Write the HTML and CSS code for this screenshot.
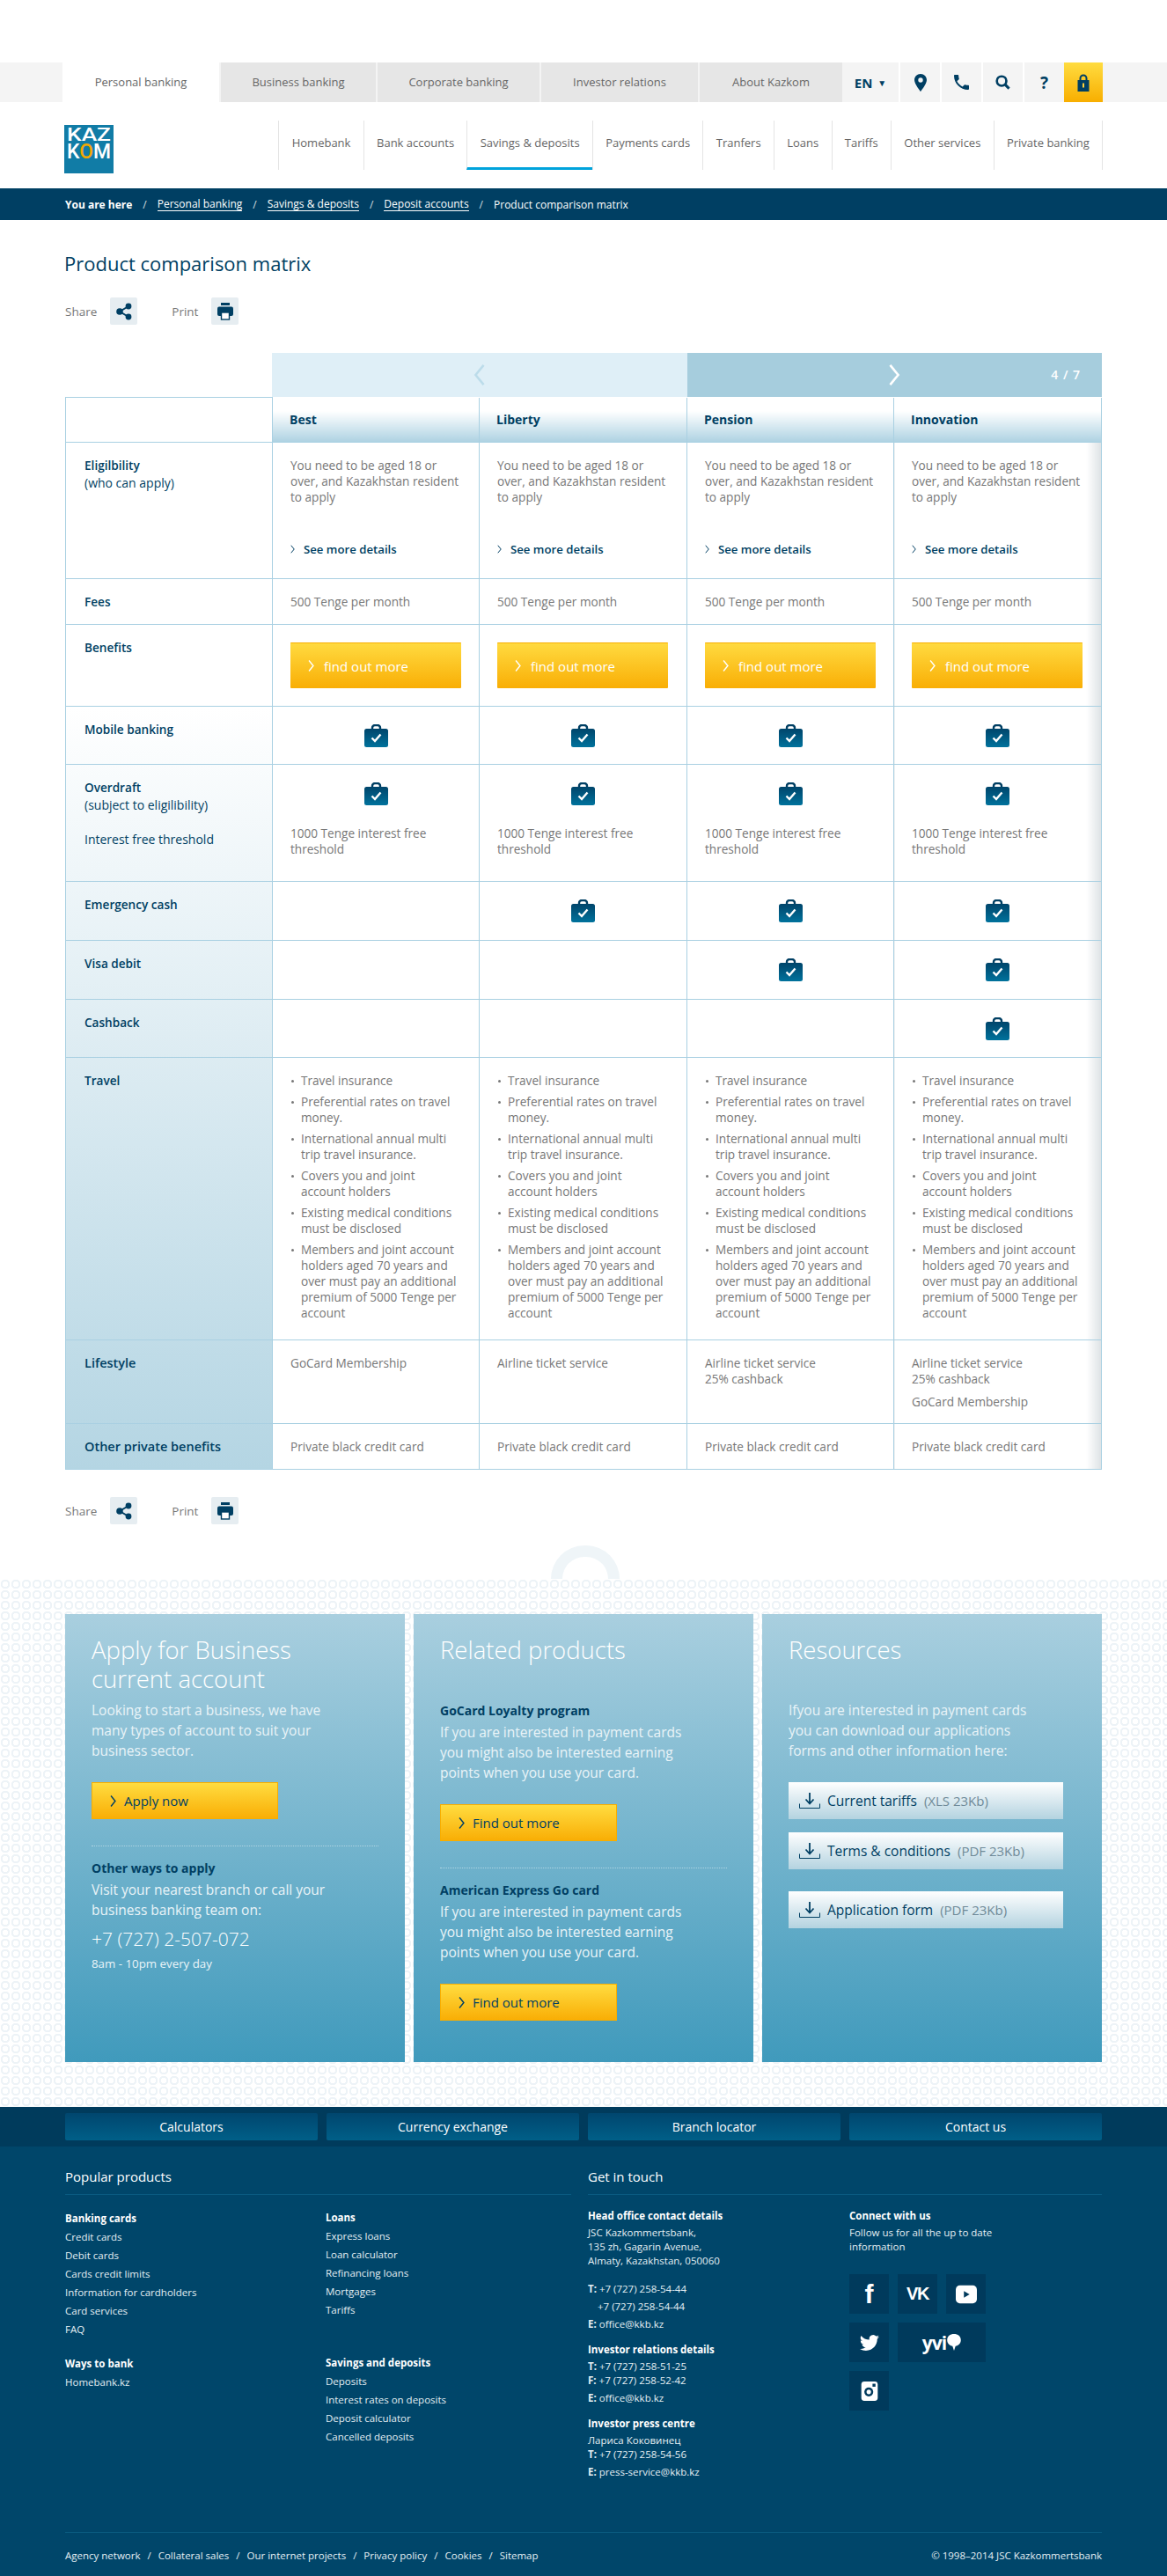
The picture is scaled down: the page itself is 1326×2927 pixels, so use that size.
FILE: index.html
```html
<!DOCTYPE html>
<html lang="en">
<head>
  <meta charset="UTF-8" />
  <title>Product comparison matrix</title>
  <link rel="stylesheet" href="styles.css">
</head>
<body>
  <svg class="sprite" xmlns="http://www.w3.org/2000/svg">
    <defs>
      <linearGradient id="bagFill" x1="0" y1="0" x2="0" y2="1">
        <stop offset="0" stop-color="#00456b"/>
        <stop offset="1" stop-color="#00729c"/>
      </linearGradient>
    </defs>
    <symbol id="i-bag" viewBox="0 0 27 26">
      <path d="M9 7V4a3 3 0 0 1 3-3h3a3 3 0 0 1 3 3v3" fill="none" stroke="#003f63" stroke-width="2.4"/>
      <rect x="0" y="5" width="27" height="21" rx="2.5" fill="url(#bagFill)"/>
      <polyline points="8.5,15.5 12,19 18.5,11.5" fill="none" stroke="#fff" stroke-width="2.4"/>
    </symbol>
    <symbol id="i-chev" viewBox="0 0 10 20">
      <polyline points="1.5,1.5 8.5,10 1.5,18.5" fill="none" stroke="currentColor" stroke-width="2"/>
    </symbol>
    <symbol id="i-share" viewBox="0 0 18 20">
      <path d="M14 4 4 10l10 6" fill="none" stroke="#003f63" stroke-width="2"/>
      <circle cx="14" cy="4" r="3.4" fill="#003f63"/>
      <circle cx="4" cy="10" r="3.8" fill="#003f63"/>
      <circle cx="14" cy="16" r="3.4" fill="#003f63"/>
    </symbol>
    <symbol id="i-print" viewBox="0 0 18 20">
      <rect x="4" y="0" width="10" height="3" fill="#003f63"/>
      <rect x="0" y="4.5" width="18" height="10.5" rx="2" fill="#003f63"/>
      <rect x="4.5" y="11" width="9" height="8" fill="#fff" stroke="#003f63" stroke-width="1.4"/>
    </symbol>
    <symbol id="i-pin" viewBox="0 0 14 20">
      <path fill-rule="evenodd" fill="#003f63" d="M7 0C3 0 0 3 0 7c0 4.500 7 13 7 13s7-8.500 7-13c0-4-3-7-7-7zm0 4.300a2.700 2.700 0 1 1 0 5.400 2.700 2.700 0 0 1 0-5.400z"/>
    </symbol>
    <symbol id="i-phone" viewBox="3 3 18 18">
      <path fill="#003f63" d="M6.620 10.790c1.440 2.830 3.760 5.140 6.590 6.590l2.200-2.200c.27-.27.67-.36 1.020-.24 1.120.37 2.330.57 3.570.57.550 0 1 .45 1 1V20c0 .55-.45 1-1 1-9.390 0-17-7.610-17-17 0-.55.45-1 1-1h3.500c.55 0 1 .45 1 1 0 1.250.2 2.450.57 3.570.11.35.03.74-.25 1.020l-2.200 2.200z"/>
    </symbol>
    <symbol id="i-search" viewBox="0 0 18 18">
      <circle cx="7.500" cy="7.500" r="5.700" fill="none" stroke="#003f63" stroke-width="2.800"/>
      <line x1="11.500" y1="11.500" x2="16.500" y2="16.500" stroke="#003f63" stroke-width="3.200"/>
    </symbol>
    <symbol id="i-lock" viewBox="0 0 14 20">
      <path d="M3.500 8V5a3.500 3.500 0 0 1 7 0v3" fill="none" stroke="#003f63" stroke-width="2"/>
      <rect x="0.500" y="7" width="13" height="13" fill="#003f63"/>
      <rect x="6" y="10.500" width="2" height="5" fill="#ffd23a"/>
    </symbol>
    <symbol id="i-down" viewBox="0 0 24 18">
      <path d="M12 0v12M7.500 7.500 12 12.500l4.500-5" fill="none" stroke="#003f63" stroke-width="1.800"/>
      <path d="M.5 12.500v5h23v-5" fill="none" stroke="#003f63" stroke-width="1"/>
    </symbol>
  </svg>

  <header>
    <div class="top-strip">
      <div class="wrap top-row">
        <ul class="tabs">
          <li class="tab tab-active">Personal banking</li>
          <li class="tab">Business banking</li>
          <li class="tab">Corporate banking</li>
          <li class="tab">Investor relations</li>
          <li class="tab">About Kazkom</li>
        </ul>
        <div class="tools">
          <a class="tool tool-lang">EN <span class="caret">▼</span></a>
          <a class="tool"><svg class="ic-pin"><use href="#i-pin"/></svg></a>
          <a class="tool"><svg class="ic-tool"><use href="#i-phone"/></svg></a>
          <a class="tool"><svg class="ic-tool"><use href="#i-search"/></svg></a>
          <a class="tool tool-help">?</a>
          <a class="tool tool-lock"><svg class="ic-pin"><use href="#i-lock"/></svg></a>
        </div>
      </div>
    </div>

    <div class="wrap main-head">
      <svg class="logo" viewBox="0 0 56 55">
        <rect width="56" height="55" fill="#117ca6"/>
        <text class="logo-kaz" x="3" y="18" textLength="50" lengthAdjust="spacingAndGlyphs">KAZ</text>
        <text class="logo-kom" x="3" y="38" textLength="50" lengthAdjust="spacingAndGlyphs">K<tspan fill="#f5a800">O</tspan>M</text>
      </svg>
      <nav class="main-nav">
        <a>Homebank</a>
        <a>Bank accounts</a>
        <a class="current">Savings &amp; deposits</a>
        <a>Payments cards</a>
        <a>Tranfers</a>
        <a>Loans</a>
        <a>Tariffs</a>
        <a>Other services</a>
        <a>Private banking</a>
      </nav>
    </div>

    <div class="crumbs">
      <div class="wrap crumbs-row">
        <strong>You are here</strong><i>/</i>
        <a>Personal banking</a><i>/</i>
        <a>Savings &amp; deposits</a><i>/</i>
        <a>Deposit accounts</a><i>/</i>
        <span>Product comparison matrix</span>
      </div>
    </div>
  </header>

  <main class="wrap">
    <h1>Product comparison matrix</h1>
    <div class="share-row">
      <span>Share</span><a class="share-btn"><svg class="ic-share"><use href="#i-share"/></svg></a>
      <span class="print-label">Print</span><a class="share-btn"><svg class="ic-share"><use href="#i-print"/></svg></a>
    </div>

    <div class="pager">
      <div class="pager-prev"><svg class="ic-pager"><use href="#i-chev" transform="matrix(-1 0 0 1 14 0)"/></svg></div>
      <div class="pager-next"><svg class="ic-pager"><use href="#i-chev"/></svg><span class="pager-count">4 / 7</span></div>
    </div>

    <table class="matrix">
      <colgroup>
        <col class="col-label"><col class="col-a"><col class="col-b"><col class="col-a"><col class="col-b">
      </colgroup>
      <thead>
        <tr class="r-head">
          <td class="corner"></td>
          <th>Best</th><th>Liberty</th><th>Pension</th><th>Innovation</th>
        </tr>
      </thead>
      <tbody>
        <tr class="r-elig">
          <th>Eligilbility<span class="sub">(who can apply)</span></th>
          <td><p>You need to be aged 18 or over, and Kazakhstan resident to apply</p><a class="more"><svg class="ic-more"><use href="#i-chev"/></svg>See more details</a></td>
          <td><p>You need to be aged 18 or over, and Kazakhstan resident to apply</p><a class="more"><svg class="ic-more"><use href="#i-chev"/></svg>See more details</a></td>
          <td><p>You need to be aged 18 or over, and Kazakhstan resident to apply</p><a class="more"><svg class="ic-more"><use href="#i-chev"/></svg>See more details</a></td>
          <td><p>You need to be aged 18 or over, and Kazakhstan resident to apply</p><a class="more"><svg class="ic-more"><use href="#i-chev"/></svg>See more details</a></td>
        </tr>
        <tr class="r-fees">
          <th>Fees</th>
          <td>500 Tenge per month</td><td>500 Tenge per month</td><td>500 Tenge per month</td><td>500 Tenge per month</td>
        </tr>
        <tr class="r-benefits">
          <th>Benefits</th>
          <td><a class="find"><svg class="ic-find"><use href="#i-chev"/></svg>find out more</a></td>
          <td><a class="find"><svg class="ic-find"><use href="#i-chev"/></svg>find out more</a></td>
          <td><a class="find"><svg class="ic-find"><use href="#i-chev"/></svg>find out more</a></td>
          <td><a class="find"><svg class="ic-find"><use href="#i-chev"/></svg>find out more</a></td>
        </tr>
      </tbody>
      <tbody class="shaded">
        <tr class="r-tick">
          <th>Mobile banking</th>
          <td class="tick"><svg class="ic-bag"><use href="#i-bag"/></svg></td>
          <td class="tick"><svg class="ic-bag"><use href="#i-bag"/></svg></td>
          <td class="tick"><svg class="ic-bag"><use href="#i-bag"/></svg></td>
          <td class="tick"><svg class="ic-bag"><use href="#i-bag"/></svg></td>
        </tr>
        <tr class="r-overdraft">
          <th>Overdraft<span class="sub">(subject to eligilibility)</span><span class="sub sub-gap">Interest free threshold</span></th>
          <td class="tick"><svg class="ic-bag"><use href="#i-bag"/></svg><p class="threshold">1000 Tenge interest free threshold</p></td>
          <td class="tick"><svg class="ic-bag"><use href="#i-bag"/></svg><p class="threshold">1000 Tenge interest free threshold</p></td>
          <td class="tick"><svg class="ic-bag"><use href="#i-bag"/></svg><p class="threshold">1000 Tenge interest free threshold</p></td>
          <td class="tick"><svg class="ic-bag"><use href="#i-bag"/></svg><p class="threshold">1000 Tenge interest free threshold</p></td>
        </tr>
        <tr class="r-tick-tall">
          <th>Emergency cash</th>
          <td></td>
          <td class="tick"><svg class="ic-bag"><use href="#i-bag"/></svg></td>
          <td class="tick"><svg class="ic-bag"><use href="#i-bag"/></svg></td>
          <td class="tick"><svg class="ic-bag"><use href="#i-bag"/></svg></td>
        </tr>
        <tr class="r-tick-tall">
          <th>Visa debit</th>
          <td></td>
          <td></td>
          <td class="tick"><svg class="ic-bag"><use href="#i-bag"/></svg></td>
          <td class="tick"><svg class="ic-bag"><use href="#i-bag"/></svg></td>
        </tr>
        <tr class="r-tick">
          <th>Cashback</th>
          <td></td>
          <td></td>
          <td></td>
          <td class="tick"><svg class="ic-bag"><use href="#i-bag"/></svg></td>
        </tr>
        <tr class="r-travel">
          <th>Travel</th>
          <td><ul class="perks"><li>Travel insurance</li><li>Preferential rates on travel money.</li><li>International annual multi trip travel insurance.</li><li>Covers you and joint account holders</li><li>Existing medical conditions must be disclosed</li><li>Members and joint account holders aged 70 years and over must pay an additional premium of 5000 Tenge per account</li></ul></td>
          <td><ul class="perks"><li>Travel insurance</li><li>Preferential rates on travel money.</li><li>International annual multi trip travel insurance.</li><li>Covers you and joint account holders</li><li>Existing medical conditions must be disclosed</li><li>Members and joint account holders aged 70 years and over must pay an additional premium of 5000 Tenge per account</li></ul></td>
          <td><ul class="perks"><li>Travel insurance</li><li>Preferential rates on travel money.</li><li>International annual multi trip travel insurance.</li><li>Covers you and joint account holders</li><li>Existing medical conditions must be disclosed</li><li>Members and joint account holders aged 70 years and over must pay an additional premium of 5000 Tenge per account</li></ul></td>
          <td><ul class="perks"><li>Travel insurance</li><li>Preferential rates on travel money.</li><li>International annual multi trip travel insurance.</li><li>Covers you and joint account holders</li><li>Existing medical conditions must be disclosed</li><li>Members and joint account holders aged 70 years and over must pay an additional premium of 5000 Tenge per account</li></ul></td>
        </tr>
        <tr class="r-lifestyle">
          <th class="big">Lifestyle</th>
          <td>GoCard Membership</td>
          <td>Airline ticket service</td>
          <td>Airline ticket service<br>25% cashback</td>
          <td>Airline ticket service<br>25% cashback<p class="extra">GoCard Membership</p></td>
        </tr>
        <tr class="r-other">
          <th class="big">Other private benefits</th>
          <td>Private black credit card</td><td>Private black credit card</td><td>Private black credit card</td><td>Private black credit card</td>
        </tr>
      </tbody>
    </table>

    <div class="share-row share-row-end">
      <span>Share</span><a class="share-btn"><svg class="ic-share"><use href="#i-share"/></svg></a>
      <span class="print-label">Print</span><a class="share-btn"><svg class="ic-share"><use href="#i-print"/></svg></a>
    </div>
  </main>

  <section class="promo">
    <div class="promo-arc"></div>
    <div class="wrap promo-grid">
      <article class="card">
        <h2>Apply for Business<br>current account</h2>
        <p>Looking to start a business, we have many types of account to suit your business sector.</p>
        <a class="cta cta-apply"><svg class="ic-cta"><use href="#i-chev"/></svg>Apply now</a>
        <hr class="dots">
        <h3>Other ways to apply</h3>
        <p>Visit your nearest branch or call your business banking team on:</p>
        <p class="phone">+7 (727) 2-507-072</p>
        <p class="hours">8am - 10pm every day</p>
      </article>
      <article class="card">
        <h2 class="h-single">Related products</h2>
        <h3>GoCard Loyalty program</h3>
        <p>If you are interested in payment cards you might also be interested earning points when you use your card.</p>
        <a class="cta"><svg class="ic-cta"><use href="#i-chev"/></svg>Find out more</a>
        <hr class="dots">
        <h3>American Express Go card</h3>
        <p>If you are interested in payment cards you might also be interested earning points when you use your card.</p>
        <a class="cta"><svg class="ic-cta"><use href="#i-chev"/></svg>Find out more</a>
      </article>
      <article class="card">
        <h2 class="h-single">Resources</h2>
        <p>Ifyou are interested in payment cards you can download our applications forms and other information here:</p>
        <div class="files">
          <a class="file"><svg class="ic-down"><use href="#i-down"/></svg>Current tariffs<small>(XLS 23Kb)</small></a>
          <a class="file"><svg class="ic-down"><use href="#i-down"/></svg>Terms &amp; conditions<small>(PDF 23Kb)</small></a>
          <a class="file file-gap"><svg class="ic-down"><use href="#i-down"/></svg>Application form<small>(PDF 23Kb)</small></a>
        </div>
      </article>
    </div>
  </section>

  <footer>
    <div class="quick">
      <div class="wrap quick-row">
        <a>Calculators</a><a>Currency exchange</a><a>Branch locator</a><a>Contact us</a>
      </div>
    </div>
    <div class="wrap foot-cols">
      <section class="foot-left">
        <h4>Popular products</h4>
        <div class="foot-grid">
          <div>
            <ul class="foot-list foot-first">
              <li class="head">Banking cards</li>
              <li>Credit cards</li><li>Debit cards</li><li>Cards credit limits</li>
              <li>Information for cardholders</li><li>Card services</li><li>FAQ</li>
            </ul>
            <ul class="foot-list">
              <li class="head">Ways to bank</li>
              <li>Homebank.kz</li>
            </ul>
          </div>
          <div>
            <ul class="foot-list foot-loans">
              <li class="head">Loans</li>
              <li>Express loans</li><li>Loan calculator</li><li>Refinancing loans</li><li>Mortgages</li><li>Tariffs</li>
            </ul>
            <ul class="foot-list">
              <li class="head">Savings and deposits</li>
              <li>Deposits</li><li>Interest rates on deposits</li><li>Deposit calculator</li><li>Cancelled deposits</li>
            </ul>
          </div>
        </div>
      </section>
      <section class="foot-right">
        <h4>Get in touch</h4>
        <div class="foot-grid foot-grid-right">
          <div>
            <h5>Head office contact details</h5>
            <p>JSC Kazkommertsbank,<br>135 zh, Gagarin Avenue,<br>Almaty, Kazakhstan, 050060</p>
            <p class="loose loose-first"><b>T:</b> +7 (727) 258-54-44<br><span class="indent">+7 (727) 258-54-44</span><br><b>E:</b> office@kkb.kz</p>
            <h5>Investor relations details</h5>
            <p><b>T:</b> +7 (727) 258-51-25<br><b>F:</b> +7 (727) 258-52-42</p>
            <p class="loose"><b>E:</b> office@kkb.kz</p>
            <h5>Investor press centre</h5>
            <p>Лариса Коковинец<br><b>T:</b> +7 (727) 258-54-56</p>
            <p class="loose"><b>E:</b> press-service@kkb.kz</p>
          </div>
          <div>
            <h5>Connect with us</h5>
            <p>Follow us for all the up to date<br>information</p>
            <div class="social">
              <a class="soc soc-text">f</a>
              <a class="soc soc-vk">VK</a>
              <a class="soc">
                <svg class="ic-soc" viewBox="0 0 26 22"><rect width="26" height="22" rx="5" fill="#fff"/><polygon points="10,7 10,15 17,11" fill="#003a5c"/></svg>
              </a>
              <a class="soc">
                <svg class="ic-soc" viewBox="0 0 24 24"><path fill="#fff" d="M23.950 4.570a10 10 0 0 1-2.820.77 4.960 4.960 0 0 0 2.160-2.720c-.95.55-2 .96-3.120 1.190a4.920 4.920 0 0 0-8.380 4.480A13.980 13.980 0 0 1 1.640 3.160a4.930 4.930 0 0 0 1.520 6.570 4.900 4.900 0 0 1-2.230-.62v.06a4.920 4.920 0 0 0 3.950 4.830 5 5 0 0 1-2.210.08 4.940 4.940 0 0 0 4.600 3.420A9.870 9.870 0 0 1 0 19.540a13.940 13.940 0 0 0 7.550 2.210c9.050 0 14-7.500 14-13.980 0-.21 0-.42-.02-.63a9.940 9.940 0 0 0 2.460-2.550z"/></svg>
              </a>
              <a class="soc soc-wide">yvi<svg class="ic-bubble" viewBox="0 0 18 22"><path fill="#fff" d="M9 0c5 0 9 3 9 8 0 4-3 7-7 8l-2 6-2-6C3 15 0 12 0 8c0-5 4-8 9-8z"/></svg></a>
              <a class="soc">
                <svg class="ic-soc" viewBox="0 0 22 26"><rect width="22" height="26" rx="4" fill="#fff"/><circle cx="10" cy="14" r="6" fill="#003a5c"/><circle cx="10" cy="14" r="3" fill="#fff"/><rect x="15" y="3" width="4" height="4" fill="#003a5c"/></svg>
              </a>
            </div>
          </div>
        </div>
      </section>
    </div>
    <div class="wrap foot-bottom">
      <div class="foot-links">
        <a>Agency network</a><i>/</i><a>Collateral sales</a><i>/</i><a>Our internet projects</a><i>/</i><a>Privacy policy</a><i>/</i><a>Cookies</a><i>/</i><a>Sitemap</a>
      </div>
      <div>© 1998–2014 JSC Kazkommertsbank</div>
    </div>
  </footer>
</body>
</html>
```

FILE: styles.css
```css
* { box-sizing: border-box; }
body { margin: 0; padding-top: 71px; font-family: 'Open Sans', sans-serif; font-size: 13px; color: #777; background: #fff; }
ul { list-style: none; margin: 0; padding: 0; }
p { margin: 0; }
a { color: inherit; text-decoration: none; }
svg { display: block; }
.sprite { width: 0; height: 0; }
.wrap { width: 1178px; margin: 0 auto; }

/* top strip */
.top-strip { background: #f4f4f4; height: 45px; }
.top-row { display: flex; justify-content: space-between; height: 45px; }
.tabs { display: flex; gap: 2px; margin-left: -3px; flex-shrink: 0; }
.tab { width: 178px; background: #e6e6e6; color: #666; line-height: 45px; text-align: center; white-space: nowrap; }
.tab:nth-child(2) { width: 176px; }
.tab:nth-child(3) { width: 184px; }
.tab:nth-child(5) { width: 162px; }
.tab-active { background: #fff; }
.tools { display: flex; gap: 2px; flex-shrink: 0; margin-right: -1px; }
.tool { width: 45px; height: 45px; background: #f4f4f4; display: flex; align-items: center; justify-content: center; color: #003f63; box-shadow: 2px 0 0 #fff; }
.tool-lang { width: 64px; font-weight: 700; font-size: 15px; gap: 6px; }
.caret { font-size: 10px; }
.tool-help { font-size: 19px; font-weight: 700; }
.tool-lock { background: linear-gradient(#ffdc40, #f8ae00); width: 44px; box-shadow: none; margin-left: -2px; }
.ic-pin { width: 14px; height: 20px; }
.ic-tool { width: 17px; height: 17px; }

/* logo + nav */
.main-head { display: flex; justify-content: space-between; height: 98px; padding-top: 21px; }
.logo { width: 56px; height: 55px; margin: 5px 0 0 -1px; }
.logo text { fill: #fff; font-family: Roboto, sans-serif; font-weight: 500; }
.logo-kaz { font-size: 20px; }
.logo-kom { font-size: 23px; }
.main-nav { display: flex; height: 56px; border-right: 1px solid #e4e4e4; margin-right: -1px; }
.main-nav a { padding: 0 14.300px; line-height: 51px; border-left: 1px solid #e4e4e4; color: #666; }
.main-nav .current { border-bottom: 3px solid #00a3dc; }

/* breadcrumb */
.crumbs { height: 36px; background: #003f63; color: #fff; font-size: 12px; }
.crumbs-row { display: flex; align-items: center; height: 36px; }
.crumbs i { font-style: normal; margin: 0 12px; opacity: .8; }
.crumbs a { border-bottom: 1px solid #fff; line-height: 15px; }

/* title and share */
h1 { margin: 34px 0 0 -1px; font-size: 22px; font-weight: 400; line-height: 30px; color: #003f63; }
.share-row { display: flex; align-items: center; margin-top: 24px; height: 31px; font-size: 13.500px; }
.share-btn { width: 31px; height: 31px; margin-left: 15px; background: #e6edf1; border-radius: 2px; display: flex; align-items: center; justify-content: center; }
.print-label { margin-left: 39px; }
.ic-share { width: 18px; height: 20px; }
.share-row-end { margin-top: 31px; margin-bottom: 62px; }

/* pager */
.pager { display: flex; margin: 32px 0 0 235px; height: 50px; }
.pager-prev, .pager-next { display: flex; align-items: center; justify-content: center; width: 50%; position: relative; }
.pager-prev { background: #dfeff7; color: #bcdcea; }
.pager-next { background: #a6cddd; color: #fff; }
.ic-pager { width: 14px; height: 26px; }
.pager-count { position: absolute; right: 24px; top: 15px; color: #fff; font-size: 14px; font-weight: 600; letter-spacing: 1px; }

/* matrix */
.matrix { width: 1178px; table-layout: fixed; border-collapse: collapse; line-height: 18px; font-size: 13.600px; }
.col-label { width: 235px; }
.col-a { width: 235px; }
.col-b { width: 236px; }
.matrix th, .matrix td { border: 1px solid #a9d0e2; vertical-align: top; padding: 17px 20px 0; text-align: left; }
.matrix td { background: #fff; }
.matrix td:last-child { background: linear-gradient(to left, #dde2e5, #fff 17px); }
.matrix tbody th { color: #003f63; font-size: 13.600px; font-weight: 600; line-height: 20px; padding-top: 16px; padding-left: 21px; }
.matrix tbody th.big { font-size: 14.500px; }
.shaded { background: linear-gradient(#fff, #b4d5e3); }
.matrix .sub { display: block; font-size: 14px; font-weight: 400; }
.matrix .sub-gap { margin-top: 19px; }
.r-head { height: 51px; }
.matrix .r-head th { background: linear-gradient(#fff 30%, #aed2e2); border-top: 0; padding: 16px 19px 0; color: #003f63; font-size: 14px; font-weight: 700; }
.r-elig { height: 155px; }
.r-fees { height: 52px; }
.r-benefits { height: 93px; }
.r-tick { height: 66px; }
.r-tick-tall { height: 67px; }
.r-overdraft { height: 133px; }
.r-travel { height: 321px; }
.r-lifestyle { height: 95px; }
.r-other { height: 52px; }
.more { display: flex; align-items: center; gap: 10px; margin-top: 41px; color: #003f63; font-size: 13.200px; font-weight: 600; }
.ic-more { width: 5px; height: 10px; }
.matrix .r-benefits td { padding-top: 20px; }
.find { display: flex; align-items: center; gap: 11px; width: 194px; height: 52px; padding-left: 20px; background: linear-gradient(#ffda40, #f9ae05); border-top: 1px solid #f8ae00; border-radius: 1px; color: #fff; font-size: 15px; }
.ic-find { width: 7px; height: 15px; }
.matrix td.tick { padding-top: 20px; }
.ic-bag { width: 27px; height: 26px; margin: 0 auto; }
.threshold { margin-top: 23px; }
.perks { max-width: 190px; }
.perks li { position: relative; padding-left: 12px; margin-bottom: 6px; }
.perks li::before { content: ""; position: absolute; left: 1px; top: 8px; width: 3px; height: 3px; border-radius: 50%; background: #777; }
.extra { margin-top: 8px; }

/* promo cards */
.promo { position: relative; padding: 40px 0 51px; background-color: #fff; background-image: radial-gradient(circle at center, transparent 3px, #edf3f7 3.500px, #edf3f7 5px, transparent 5.500px); background-size: 12px 12px; }
.promo-arc { position: absolute; left: 626px; top: -38px; width: 78px; height: 38px; border: 13px solid #eff5f8; border-bottom: 0; border-radius: 39px 39px 0 0; }
.promo-grid { display: grid; grid-template-columns: repeat(3, 386px); gap: 10px; }
.card { height: 509px; padding: 24px 30px 0; background: linear-gradient(#a9cfdf, #409abc); color: #eaf4f8; font-size: 15.500px; line-height: 23px; }
.card p { max-width: 285px; }
.card h2 { margin: 0 0 8px; font-size: 27.500px; font-weight: 300; line-height: 33px; color: #fff; }
.card .h-single { margin-bottom: 41px; }
.card h3 { margin: 0 0 2px; font-size: 14px; font-weight: 700; line-height: 23px; color: #003f63; }
.cta { display: flex; align-items: center; gap: 9px; width: 201px; height: 42px; margin-top: 24px; padding-left: 20px; background: linear-gradient(#ffdc40, #f9ae05); border: 1px solid #f8ae00; color: #003f63; font-size: 15px; }
.cta-apply { width: 212px; }
.ic-cta { width: 7px; height: 15px; }
.dots { border: 0; border-top: 1px dotted rgba(255, 255, 255, .45); margin: 30px 0 13px; }
.card .phone { margin-top: 6px; font-size: 21px; line-height: 30px; color: #fff; font-weight: 300; }
.card .hours { margin-top: 2px; font-size: 13.300px; }
.files { margin-top: 24px; }
.file { display: flex; align-items: center; width: 312px; height: 42px; margin-top: 15px; padding-left: 12px; background: linear-gradient(#fff, #b4d3e0); color: #003f63; font-size: 15.500px; }
.files .file:first-child { margin-top: 0; }
.files .file-gap { margin-top: 25px; }
.file small { font-size: 15px; color: #6f8a98; margin-left: 8px; }
.ic-down { width: 24px; height: 18px; margin-right: 8px; }

/* footer */
footer { background: #00466a; color: #e4eef3; font-size: 11.500px; height: 534px; }
.quick { height: 45px; padding-top: 7px; background: #003b5c; }
.quick-row { display: grid; grid-template-columns: repeat(4, 1fr); gap: 10px; }
.quick a { height: 31px; line-height: 31px; text-align: center; background: linear-gradient(#00466e, #005f88); border-radius: 2px; font-size: 14px; color: #fff; }
.foot-cols { display: flex; justify-content: space-between; height: 438px; padding-top: 23px; }
.foot-left { width: 575px; }
.foot-right { width: 584px; }
h4 { margin: 0 0 16px; height: 32px; padding-bottom: 9px; font-size: 15px; font-weight: 400; line-height: 22px; color: #fff; border-bottom: 1px solid #0a5a80; }
.foot-grid { display: grid; grid-template-columns: 296px 1fr; }
.foot-grid-right { grid-template-columns: 297px 1fr; margin-top: 1px; }
.foot-list { line-height: 21px; }
.foot-first { margin-bottom: 18px; }
.foot-loans { margin-top: -1px; margin-bottom: 39px; }
.head, h5 { font-weight: 700; color: #fff; }
h5 { margin: 0 0 3px; font-size: 11.500px; line-height: 16px; }
.foot-right p { line-height: 16px; }
.foot-right .loose { line-height: 20px; margin: 2px 0 11px; }
.foot-right .loose-first { margin-top: 14px; }
.indent { margin-left: 11px; }
.social { display: grid; grid-template-columns: repeat(3, 45px); grid-auto-rows: 45px; gap: 10px; margin-top: 23px; }
.soc { display: flex; align-items: center; justify-content: center; background: #003a5c; color: #fff; }
.soc-text { font: 700 30px 'Liberation Sans', sans-serif; }
.soc-vk { font: 700 20px 'Liberation Sans', sans-serif; letter-spacing: -1.500px; }
.soc-wide { grid-column: span 2; font: 700 21px 'Open Sans', sans-serif; gap: 1px; letter-spacing: -1px; }
.ic-soc { width: 24px; height: 22px; }
.ic-bubble { width: 16px; height: 19px; }
.foot-bottom { display: flex; justify-content: space-between; align-items: center; height: 51px; border-top: 1px solid #0a5a80; font-size: 11.500px; }
.foot-links { display: flex; }
.foot-links i { font-style: normal; margin: 0 8px; }
```
